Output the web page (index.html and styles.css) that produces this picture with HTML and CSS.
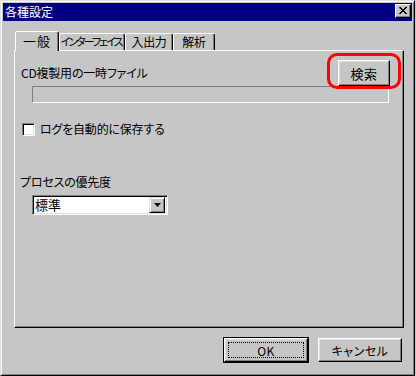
FILE: index.html
```html
<!DOCTYPE html>
<html>
<head>
<title>各種設定</title>
<link rel="stylesheet" href="styles.css">
</head>
<body>

<div class="window">
  <div class="titlebar">
    <span class="title">各種設定</span>
    <div class="close-btn">
      <svg width="8" height="7" viewBox="0 0 8 7"><path d="M0 0h2v1h1v1h2v-1h1v-1h2v1h-1v1h-1v1h-1v1h1v1h1v1h1v1h-2v-1h-1v-1h-2v1h-1v1h-2v-1h1v-1h1v-1h1v-1h-1v-1h-1z" fill="#000"/></svg>
    </div>
  </div>

  <div class="dlg-body">
    <div class="tabs">
      <div class="tab tab-active" style="width:44px">一般</div>
      <div class="tab tab-narrow" style="width:66px">インターフェイス</div>
      <div class="tab" style="width:48px">入出力</div>
      <div class="tab" style="width:42px">解析</div>
    </div>

    <div class="panel">
      <div class="row-top">
        <span class="label">CD複製用の一時ファイル</span>
        <div class="search-wrap">
          <div class="btn btn-search">検索</div>
          <div class="ring"></div>
        </div>
      </div>
      <div class="field-disabled"></div>

      <div class="check-row">
        <div class="checkbox"></div>
        <span class="label">ログを自動的に保存する</span>
      </div>

      <div class="label prio-label">プロセスの優先度</div>
      <div class="combo">
        <span class="combo-text">標準</span>
        <div class="combo-arrow">
          <svg width="7" height="4" viewBox="0 0 7 4"><path d="M0 0h7l-3.5 4z" fill="#000"/></svg>
        </div>
      </div>
    </div>

    <div class="buttons">
      <div class="btn-default"><div class="btn btn-ok"><span class="focus">OK</span></div></div>
      <div class="btn btn-cancel">キャンセル</div>
    </div>
  </div>
</div>

</body>
</html>
```

FILE: styles.css
```css
/* styles.css */

body {
  margin: 0;
  background: #c6c6c6;
  font-family: "Noto Sans CJK JP", "DejaVu Sans", sans-serif;
  font-size: 12px;
  font-feature-settings: "palt";
  color: #000;
}

.window {
  width: 415px;
  height: 376px;
  box-sizing: border-box;
  border: 1px solid;
  border-color: #dfdfdf #000 #000 #dfdfdf;
  box-shadow: inset 1px 1px #fff, inset -1px -1px #808080;
  padding: 2px;
  background: #c6c6c6;
}

.titlebar {
  height: 18px;
  background: #000080;
  color: #fff;
  display: flex;
  align-items: center;
  justify-content: space-between;
  padding-left: 2px;
}

.title {
  font-size: 12px;
  line-height: 18px;
}

.close-btn {
  width: 16px;
  height: 14px;
  box-sizing: border-box;
  margin-right: 1px;
  margin-top: -2px;
  background: #c6c6c6;
  border: 1px solid;
  border-color: #fff #000 #000 #fff;
  box-shadow: inset -1px -1px #808080;
  display: flex;
  align-items: center;
  justify-content: center;
  padding: 0 1px 1px 0;
}

.dlg-body {
  padding: 10px 0 0 11px;
}

.tabs {
  display: flex;
  align-items: flex-end;
  height: 19px;
  margin-left: 1px;
  position: relative;
  z-index: 1;
}

.tab {
  height: 17px;
  box-sizing: border-box;
  border: 1px solid;
  border-bottom: none;
  border-color: #fff #000 transparent #fff;
  border-radius: 2px 3px 0 0;
  box-shadow: inset -1px 0 #808080;
  background: #c6c6c6;
  text-align: center;
  line-height: 15px;
  white-space: nowrap;
  overflow: hidden;
  letter-spacing: -0.3px;
}

.tab-narrow {
  font-size: 11px;
  letter-spacing: -2px;
  padding-right: 2px;
}

.tab-active {
  height: 20px;
  margin-bottom: -1px;
  line-height: 18px;
  font-size: 13px;
  letter-spacing: 1px;
}

.panel {
  width: 390px;
  height: 278px;
  box-sizing: border-box;
  border: 1px solid;
  border-color: #fff #000 #000 #fff;
  box-shadow: inset -1px -1px #808080;
  padding-top: 9px;
}

.label {
  letter-spacing: -0.2px;
  line-height: 14px;
}

.row-top {
  display: flex;
  align-items: center;
  justify-content: space-between;
  padding-left: 6px;
  padding-right: 13px;
}

.search-wrap {
  position: relative;
}

.btn {
  box-sizing: border-box;
  border: 1px solid;
  border-color: #fff #000 #000 #fff;
  box-shadow: inset -1px -1px #808080, inset 1px 1px #dfdfdf;
  background: #c6c6c6;
  display: flex;
  align-items: center;
  justify-content: center;
  letter-spacing: 0.5px;
}

.btn-search {
  width: 52px;
  height: 26px;
  font-size: 13px;
}

.ring {
  position: absolute;
  left: -11px;
  top: -7px;
  width: 74px;
  height: 36px;
  box-sizing: border-box;
  border: 3px solid #ff0000;
  border-radius: 10px;
}

.field-disabled {
  width: 357px;
  height: 17px;
  box-sizing: border-box;
  margin-left: 17px;
  border: 1px solid;
  border-color: #808080 #fff #fff #808080;
}

.check-row {
  display: flex;
  align-items: center;
  margin-top: 19px;
  margin-left: 7px;
  gap: 5px;
}

.checkbox {
  width: 13px;
  height: 13px;
  box-sizing: border-box;
  background: #fff;
  border: 1px solid;
  border-color: #808080 #fff #fff #808080;
  box-shadow: inset 1px 1px #000, inset -1px -1px #dfdfdf;
}

.prio-label {
  margin-top: 39px;
  margin-left: 5px;
}

.combo {
  width: 136px;
  height: 20px;
  box-sizing: border-box;
  margin-top: 6px;
  margin-left: 17px;
  background: #fff;
  border: 1px solid;
  border-color: #808080 #fff #fff #808080;
  box-shadow: inset 1px 1px #000, inset -1px -1px #dfdfdf;
  display: flex;
  align-items: center;
  justify-content: space-between;
  padding: 1px 2px 1px 2px;
}

.combo-text {
  font-size: 13px;
  line-height: 16px;
}

.combo-arrow {
  width: 16px;
  height: 16px;
  box-sizing: border-box;
  background: #c6c6c6;
  border: 1px solid;
  border-color: #dfdfdf #000 #000 #dfdfdf;
  box-shadow: inset 1px 1px #fff, inset -1px -1px #808080;
  display: flex;
  align-items: center;
  justify-content: center;
}

.buttons {
  display: flex;
  justify-content: flex-end;
  align-items: center;
  gap: 9px;
  margin-top: 9px;
  padding-right: 10px;
}

.btn-default {
  border: 1px solid #000;
}

.btn-ok {
  width: 84px;
  height: 24px;
  padding: 3px;
}

.focus {
  flex: 1;
  align-self: stretch;
  border: 1px dotted #000;
  display: flex;
  align-items: center;
  justify-content: center;
}

.btn-cancel {
  width: 84px;
  height: 24px;
}
```
